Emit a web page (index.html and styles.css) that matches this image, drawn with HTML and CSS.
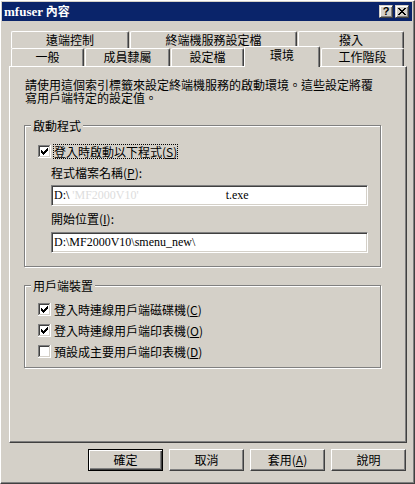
FILE: index.html
```html
<!DOCTYPE html>
<html>
<head>
<meta charset="utf-8">
<link rel="stylesheet" href="styles.css">
</head>
<body>
<div class="window">
  <div class="titlebar">
    <span class="title"><span class="latin">mfuser</span> 內容</span>
    <span class="caps">
      <span class="cap help">?</span>
      <span class="cap close"><svg width="12" height="11" viewBox="0 0 12 11" shape-rendering="crispEdges"><path d="M2 2h2v1H2z M8 2h2v1H8z M3 3h2v1H3z M7 3h2v1H7z M4 4h4v1H4z M5 5h2v1H5z M4 6h4v1H4z M3 7h2v1H3z M7 7h2v1H7z M2 8h2v1H2z M8 8h2v1H8z" fill="#000"/></svg></span>
    </span>
  </div>
  <div class="client">
    <div class="tabs">
      <div class="tabrow back">
        <div class="tab w118">遠端控制</div>
        <div class="tab w167">終端機服務設定檔</div>
        <div class="tab w106">撥入</div>
      </div>
      <div class="tabrow front">
        <div class="tab w73">一般</div>
        <div class="tab w85">成員隸屬</div>
        <div class="tab w73">設定檔</div>
        <div class="tab w76 selected">環境</div>
        <div class="tab w83 last">工作階段</div>
      </div>
    </div>
    <div class="panel">
      <div class="desc">請使用這個索引標籤來設定終端機服務的啟動環境。這些設定將覆<br>寫用戶端特定的設定值。</div>
      <div class="group g1">
        <div class="gtitle">啟動程式</div>
        <div class="cbrow first">
          <svg class="cb" width="13" height="13" viewBox="0 0 13 13" shape-rendering="crispEdges"><rect width="13" height="13" fill="#fff"/><path d="M0 0h12v1H1v11H0z" fill="#808080"/><path d="M1 1h10v1H2v9H1z" fill="#404040"/><path d="M11 1h1v11H1v-1h10z" fill="#d4d0c8"/><path d="M9 3h1v1H9z M8 4h2v1H8z M3 5h1v1H3z M7 5h3v1H7z M3 6h2v1H3z M6 6h3v1H6z M3 7h5v1H3z M4 8h3v1H4z M5 9h1v1H5z" fill="#000"/></svg>
          <span class="lbl focus">登入時啟動以下程式(<u>S</u>)</span>
        </div>
        <div class="flabel l1">程式檔案名稱(<u>P</u>):</div>
        <div class="field f1"><span>D:\</span><span class="ghost">'MF2000V10'</span><span class="tail">t.exe</span></div>
        <div class="flabel l2">開始位置(<u>I</u>):</div>
        <div class="field f2">D:\MF2000V10\smenu_new\</div>
      </div>
      <div class="group g2">
        <div class="gtitle">用戶端裝置</div>
        <div class="cbrow first2">
          <svg class="cb" width="13" height="13" viewBox="0 0 13 13" shape-rendering="crispEdges"><rect width="13" height="13" fill="#fff"/><path d="M0 0h12v1H1v11H0z" fill="#808080"/><path d="M1 1h10v1H2v9H1z" fill="#404040"/><path d="M11 1h1v11H1v-1h10z" fill="#d4d0c8"/><path d="M9 3h1v1H9z M8 4h2v1H8z M3 5h1v1H3z M7 5h3v1H7z M3 6h2v1H3z M6 6h3v1H6z M3 7h5v1H3z M4 8h3v1H4z M5 9h1v1H5z" fill="#000"/></svg>
          <span class="lbl">登入時連線用戶端磁碟機(<u>C</u>)</span>
        </div>
        <div class="cbrow next">
          <svg class="cb" width="13" height="13" viewBox="0 0 13 13" shape-rendering="crispEdges"><rect width="13" height="13" fill="#fff"/><path d="M0 0h12v1H1v11H0z" fill="#808080"/><path d="M1 1h10v1H2v9H1z" fill="#404040"/><path d="M11 1h1v11H1v-1h10z" fill="#d4d0c8"/><path d="M9 3h1v1H9z M8 4h2v1H8z M3 5h1v1H3z M7 5h3v1H7z M3 6h2v1H3z M6 6h3v1H6z M3 7h5v1H3z M4 8h3v1H4z M5 9h1v1H5z" fill="#000"/></svg>
          <span class="lbl">登入時連線用戶端印表機(<u>O</u>)</span>
        </div>
        <div class="cbrow next">
          <svg class="cb" width="13" height="13" viewBox="0 0 13 13" shape-rendering="crispEdges"><rect width="13" height="13" fill="#fff"/><path d="M0 0h12v1H1v11H0z" fill="#808080"/><path d="M1 1h10v1H2v9H1z" fill="#404040"/><path d="M11 1h1v11H1v-1h10z" fill="#d4d0c8"/></svg>
          <span class="lbl">預設成主要用戶端印表機(<u>D</u>)</span>
        </div>
      </div>
    </div>
    <div class="buttons">
      <div class="btn default">確定</div>
      <div class="btn">取消</div>
      <div class="btn">套用(<u>A</u>)</div>
      <div class="btn">說明</div>
    </div>
  </div>
</div>
</body>
</html>
```

FILE: styles.css
```css
* { box-sizing: border-box; }
body {
  margin: 0;
  background: #d4d0c8;
  font-family: "Noto Sans CJK TC", "Noto Sans", sans-serif;
  font-size: 12px;
  color: #000;
}
.window {
  width: 415px;
  height: 484px;
  border: 1px solid;
  border-color: #fff #404040 #404040 #fff;
  box-shadow: inset -1px -1px #808080;
  padding: 1px 2px 2px 1px;
  display: flex;
  flex-direction: column;
  background: #d4d0c8;
}
.titlebar {
  height: 19px;
  flex: none;
  background: #0a246a;
  color: #fff;
  display: flex;
  justify-content: space-between;
  align-items: flex-start;
  padding: 0 3px 0 2px;
}
.title {
  font-weight: bold;
  font-size: 12px;
  line-height: 18px;
  white-space: nowrap;
}
.title .latin { font-family: "Liberation Serif", serif; font-size: 13px; }
.caps { display: flex; gap: 2px; margin-top: 3px; }
.cap {
  width: 14px;
  height: 13px;
  background: #d4d0c8;
  border: 1px solid;
  border-color: #d4d0c8 #404040 #404040 #d4d0c8;
  box-shadow: inset 1px 1px #fff, inset -1px -1px #808080;
  display: flex;
  align-items: center;
  justify-content: center;
  color: #000;
}
.help { font: bold 11px/11px "Liberation Sans", sans-serif; }
.close svg { display: block; }
.client {
  flex: 1;
  display: flex;
  flex-direction: column;
  padding: 10px 5px 0 7px;
}
.tabs { margin-left: 2px; width: 393px; }
.tabrow { display: flex; gap: 1px; }
.back { height: 17px; }
.front {
  height: 20px;
  margin-top: -2px;
  align-items: flex-end;
  position: relative;
  z-index: 1;
}
.tab {
  height: 100%;
  background: #d4d0c8;
  border-top: 1px solid #fff;
  border-left: 1px solid #fff;
  border-right: 1px solid #404040;
  box-shadow: inset -1px 0 #808080;
  border-radius: 2px 2px 0 0;
  text-align: center;
  line-height: 15px;
  white-space: nowrap;
}
.front .tab { height: 18px; }
.front .tab.selected { height: 21px; margin-bottom: -1px; padding-bottom: 3px; }
.w118 { width: 118px; }
.w167 { width: 167px; }
.w106 { width: 106px; }
.w73 { width: 73px; }
.w85 { width: 85px; }
.w76 { width: 76px; }
.w83 { width: 83px; }
.front .w73 + .selected { margin-left: -1px; }
.panel {
  width: 398px;
  height: 377px;
  flex: none;
  border: 1px solid;
  border-color: #fff #404040 #404040 #fff;
  box-shadow: inset -1px -1px #808080;
  padding: 11px 0 0 14px;
}
.desc {
  padding-left: 1px;
  line-height: 13px;
  white-space: nowrap;
}
.group {
  width: 357px;
  border: 1px solid #808080;
  box-shadow: inset 1px 1px #fff, 1px 1px #fff;
}
.g1 { margin-top: 21px; padding-bottom: 13px; }
.g2 { margin-top: 18px; padding-bottom: 8px; }
.gtitle {
  width: max-content;
  margin: -7px 0 0 6px;
  padding: 0 2px;
  background: #d4d0c8;
  line-height: 13px;
}
.cbrow {
  display: flex;
  align-items: center;
  height: 15px;
  margin-left: 13px;
}
.cbrow.first { margin-top: 12px; }
.cbrow.first2 { margin-top: 10px; }
.cbrow.next { margin-top: 6px; }
.cb { display: block; flex: none; }
.lbl {
  margin-left: 2px;
  border: 1px dotted transparent;
  line-height: 13px;
  white-space: nowrap;
}
.lbl.focus { border-color: #000; }
.flabel { margin-left: 26px; line-height: 13px; }
.l1 { margin-top: 7px; }
.l2 { margin-top: 6px; }
.field {
  margin-left: 26px;
  width: 317px;
  height: 21px;
  background: #fff;
  border: 1px solid;
  border-color: #808080 #fff #fff #808080;
  box-shadow: inset 1px 1px #404040, inset -1px -1px #d4d0c8;
  padding-left: 2px;
  font-family: "Liberation Serif", serif;
  font-size: 12px;
  line-height: 19px;
  white-space: nowrap;
  display: flex;
}
.f1 { margin-top: 6px; }
.f2 { margin-top: 7px; }
.ghost { color: #ddd; margin-left: 3px; }
.tail { margin-left: 87px; }
.buttons {
  display: flex;
  justify-content: flex-end;
  gap: 6px;
  margin-top: 6px;
  padding-right: 1px;
}
.btn {
  width: 75px;
  height: 22px;
  border: 1px solid;
  border-color: #fff #404040 #404040 #fff;
  box-shadow: inset -1px -1px #808080;
  text-align: center;
  line-height: 19px;
}
.btn.default {
  border-color: #000;
  box-shadow: inset 1px 1px #fff, inset -1px -1px #404040, inset -2px -2px #808080;
}
```
